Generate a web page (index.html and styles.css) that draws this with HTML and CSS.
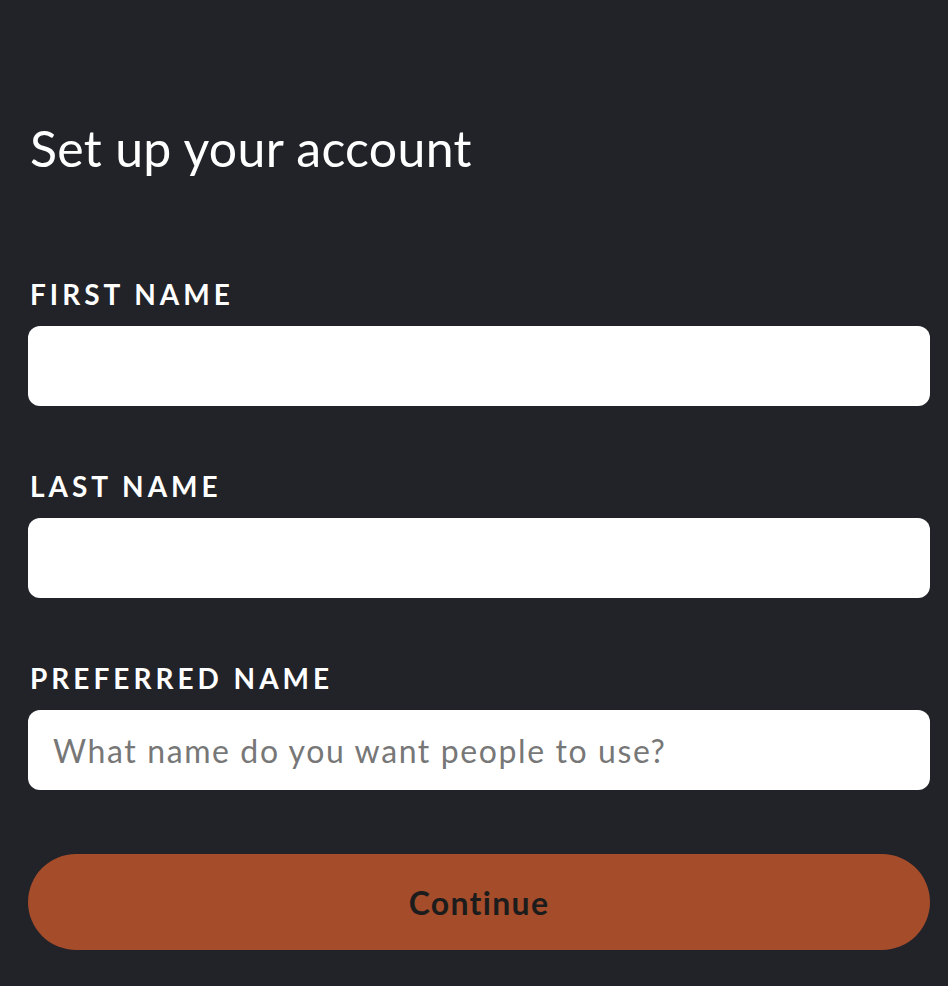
FILE: index.html
```html
<!DOCTYPE html>
<html lang="en">
<head>
  <meta charset="UTF-8" />
  <meta name="viewport" content="width=device-width, initial-scale=1.0"/>
  <title>Set up your account</title>
  <link rel="stylesheet" href="styles.css">
</head>
<body>

  <div class="container">
    <h1>Set up your account</h1>

    <form class="account-form" onsubmit="return false">
      <div class="field">
        <label for="firstName">First name</label>
        <input id="firstName" type="text" />
      </div>

      <div class="field">
        <label for="lastName">Last name</label>
        <input id="lastName" type="text" />
      </div>

      <div class="field">
        <label for="preferredName">Preferred name</label>
        <input id="preferredName" type="text" placeholder="What name do you want people to use?" />
      </div>

      <button type="submit" class="continue-btn">Continue</button>
    </form>
  </div>

</body>
</html>
```

FILE: styles.css
```css
body {
  font-family: 'Lato', 'Noto Sans', sans-serif;
  background: #212328;
  margin: 0;
  color: #ffffff;
}

.container {
  padding: 112px 18px 36px 28px;
}

h1 {
  font-weight: 400;
  font-size: 50px;
  letter-spacing: 0.3px;
  line-height: 72px;
  margin: 0 0 0 2px;
}

.account-form {
  margin-top: 92px;
}

.field {
  margin-bottom: 62px;
}

.field label {
  display: block;
  margin-left: 2px;
  font-size: 28px;
  font-weight: 700;
  text-transform: uppercase;
  letter-spacing: 4px;
  line-height: 36px;
  margin-bottom: 14px;
}

.field input {
  display: block;
  box-sizing: border-box;
  width: 100%;
  height: 80px;
  border: none;
  border-radius: 12px;
  background: #ffffff;
  padding: 0 25px;
  font-family: inherit;
  font-size: 32px;
  letter-spacing: 1.6px;
  color: #222;
  outline: none;
}

.field input::placeholder {
  color: #777777;
}

.continue-btn {
  display: block;
  width: 100%;
  height: 96px;
  margin-top: 64px;
  border: none;
  border-radius: 48px;
  background: #a54c2b;
  color: #1c1c1c;
  font-family: inherit;
  font-size: 32px;
  font-weight: 700;
  letter-spacing: 1.3px;
  cursor: pointer;
}
```
